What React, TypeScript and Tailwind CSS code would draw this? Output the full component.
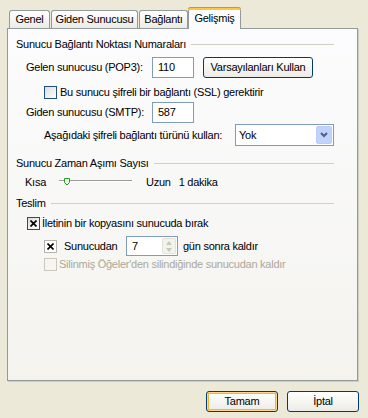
import React from 'react';

const font = { fontFamily: '"Liberation Sans", Arial, sans-serif' };

const GroupHeader: React.FC<{ title: string; className?: string }> = ({ title, className = '' }) => (
  <div className={`flex items-center h-[13px] leading-[13px] ${className}`}>
    <span>{title}</span>
    <div className="flex-1 h-px bg-[#D0D0BF] ml-[5px]" />
  </div>
);

const CheckBox: React.FC<{ checked?: boolean; disabled?: boolean; flat?: boolean }> = ({ checked, disabled, flat }) => {
  if (disabled) {
    return <div className="w-[13px] h-[13px] border border-[#CAC8BB] bg-[#F6F5F1] shrink-0" />;
  }
  return (
    <div
      className={`w-[13px] h-[13px] border shrink-0 flex items-center justify-center ${
        flat ? 'border-[#B5B5AE] bg-white' : 'border-[#1C5180] bg-gradient-to-br from-[#DCDCD7] to-white'
      }`}
    >
      {checked && (
        <svg width="7" height="7" viewBox="0 0 7 7">
          <path d="M0.5 0.5 L6.5 6.5 M6.5 0.5 L0.5 6.5" stroke="#000" strokeWidth="1.6" />
        </svg>
      )}
    </div>
  );
};

const TextBox: React.FC<{ value: string; className?: string }> = ({ value, className = '' }) => (
  <div className={`h-[21px] border border-[#7F9DB9] bg-white flex items-center pl-[5px] shrink-0 ${className}`}>{value}</div>
);

const Tab: React.FC<{ label: string; active?: boolean; className?: string }> = ({ label, active, className = '' }) =>
  active ? (
    <div
      className={`relative z-10 -mb-px h-[22px] border-x border-[#919B9C] bg-[#FCFCFE] rounded-t-[3px] flex flex-col ${className}`}
    >
      <div className="h-[3px] bg-[#FFC83C] border-t border-[#E68B2C] rounded-t-[3px] -mx-px" />
      <div className="flex-1 flex items-center justify-center pb-[3px]">{label}</div>
    </div>
  ) : (
    <div
      className={`h-[18px] border-x border-t border-[#919B9C] rounded-t-[3px] bg-gradient-to-b from-white to-[#ECEBE6] flex items-center justify-center ${className}`}
    >
      {label}
    </div>
  );

const XpButton: React.FC<{ label: string; primary?: boolean; className?: string }> = ({ label, primary, className = '' }) => (
  <div
    className={`h-[21px] rounded-[3px] border border-[#003C74] bg-gradient-to-b from-white to-[#ECEBE6] flex items-center justify-center shrink-0 ${
      primary ? 'shadow-[inset_0_0_0_1px_#FFD78A,inset_0_0_0_2px_#F8B330]' : ''
    } ${className}`}
  >
    {label}
  </div>
);

export default function App() {
  return (
    <div
      className="w-[368px] h-[418px] bg-[#ECE9D8] text-[11px] tracking-[-0.25px] text-black flex flex-col"
      style={font}
    >
      <div className="pt-[7px] pl-[7px] flex flex-col">
        {/* Tabs */}
        <div className="flex items-end h-[21px]">
          <Tab label="Genel" className="w-[41px] ml-[2px]" />
          <Tab label="Giden Sunucusu" className="w-[87px] ml-[1px]" />
          <Tab label="Bağlantı" className="w-[49px] ml-[1px]" />
          <Tab label="Gelişmiş" active className="w-[53px]" />
        </div>

        {/* Panel */}
        <div className="w-[351px] h-[353px] border border-[#919B9C] bg-gradient-to-b from-[#FCFCFE] to-[#F4F3EE] shadow-[1px_1px_0_#D0CEBF]">
          <div className="pl-[8px] pr-[23px] pt-[9px] flex flex-col">
            <GroupHeader title="Sunucu Bağlantı Noktası Numaraları" />

            <div className="flex items-center h-[21px] mt-[6px] ml-[10px]">
              <span className="w-[126px] shrink-0">Gelen sunucusu (POP3):</span>
              <TextBox value="110" className="w-[42px]" />
              <XpButton label="Varsayılanları Kullan" className="w-[110px] ml-[9px]" />
            </div>

            <div className="flex items-center h-[13px] mt-[8px] ml-[28px] gap-[3px]">
              <CheckBox />
              <span>Bu sunucu şifreli bir bağlantı (SSL) gerektirir</span>
            </div>

            <div className="flex items-center h-[21px] mt-[3px] ml-[10px]">
              <span className="w-[126px] shrink-0">Giden sunucusu (SMTP):</span>
              <TextBox value="587" className="w-[42px]" />
            </div>

            <div className="flex items-center h-[22px] mt-[1px] ml-[28px]">
              <span>Aşağıdaki şifreli bağlantı türünü kullan:</span>
              <div className="ml-auto w-[99px] h-[22px] border border-[#7F9DB9] bg-white flex items-center shrink-0">
                <span className="flex-1 pl-[3px]">Yok</span>
                <div className="w-[16px] h-[18px] mr-px rounded-[2px] bg-[#C1D3FB] border border-[#B9CDF7] flex items-center justify-center">
                  <svg width="8" height="6" viewBox="0 0 8 6">
                    <path d="M1 1 L4 4 L7 1" stroke="#4D6185" strokeWidth="2" fill="none" />
                  </svg>
                </div>
              </div>
            </div>

            <GroupHeader title="Sunucu Zaman Aşımı Sayısı" className="mt-[11px]" />

            <div className="flex items-center h-[15px] mt-[5px] ml-[9px]">
              <span className="w-[34px]">Kısa</span>
              <svg width="73" height="12" viewBox="0 0 73 12">
                <rect x="0" y="3" width="73" height="1" fill="#9D9C99" />
                <rect x="0" y="4" width="73" height="1" fill="#FFFFFF" />
                <path d="M5.5 1.5 H10.5 V5.5 L8 8 L5.5 5.5 Z" fill="#EFF7EC" stroke="#21A121" />
              </svg>
              <span className="ml-[14px]">Uzun</span>
              <span className="ml-[8px]">1 dakika</span>
            </div>

            <GroupHeader title="Teslim" className="mt-[7px]" />

            <div className="flex items-center h-[13px] mt-[7px] ml-[11px] gap-[2px]">
              <CheckBox checked />
              <span>İletinin bir kopyasını sunucuda bırak</span>
            </div>

            <div className="flex items-center h-[20px] mt-[6px] ml-[28px]">
              <CheckBox checked flat />
              <span className="ml-[7px] w-[62px] shrink-0">Sunucudan</span>
              <div className="w-[52px] h-[20px] border border-[#7F9DB9] bg-white flex items-center shrink-0">
                <span className="flex-1 pl-[5px]">7</span>
                <div className="w-[14px] h-[16px] mr-px bg-[#F3F3EE] border border-[#E3E2DA] rounded-[2px] flex flex-col items-center justify-around">
                  <svg width="6" height="4" viewBox="0 0 6 4">
                    <path d="M0 4 L3 0 L6 4 Z" fill="#C9C7BA" />
                  </svg>
                  <svg width="6" height="4" viewBox="0 0 6 4">
                    <path d="M0 0 L3 4 L6 0 Z" fill="#C9C7BA" />
                  </svg>
                </div>
              </div>
              <span className="ml-[5px]">gün sonra kaldır</span>
            </div>

            <div className="flex items-center h-[13px] mt-[2px] ml-[28px] gap-[2px] text-[#ACA899]">
              <CheckBox disabled />
              <span>Silinmiş Öğeler'den silindiğinde sunucudan kaldır</span>
            </div>
          </div>
        </div>
      </div>

      {/* Footer */}
      <div className="flex justify-end gap-[9px] pr-[9px] pt-[10px]">
        <XpButton label="Tamam" primary className="w-[72px]" />
        <XpButton label="İptal" className="w-[72px]" />
      </div>
    </div>
  );
}
